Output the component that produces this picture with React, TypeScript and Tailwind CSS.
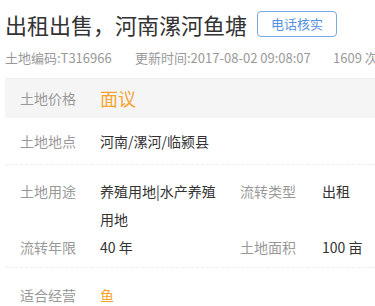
import React from "react";

const font = { fontFamily: '"Noto Sans CJK SC", "Noto Sans", sans-serif' };

export default function App() {
  return (
    <div className="w-[375px] h-[306px] overflow-hidden bg-white pl-[5px]" style={font}>
      <div className="flex items-center h-[47px] pt-[1px]">
        <div className="text-[22px] leading-[30px] text-[#333] whitespace-nowrap">出租出售，河南漯河鱼塘</div>
        <div className="ml-[10px] shrink-0 w-[80px] h-[26px] border border-[#7aa8e6] rounded-[4px] flex items-center justify-center text-[13px] text-[#5592e0]">
          电话核实
        </div>
      </div>
      <div className="flex items-center h-[22px] text-[13px] text-[#999] whitespace-nowrap">
        <div className="w-[130px] shrink-0">土地编码:T316966</div>
        <div className="w-[198px] shrink-0">更新时间:2017-08-02 09:08:07</div>
        <div className="shrink-0">1609 次</div>
      </div>
      <div className="h-[10px] border-b border-[#eeeeee]" />
      <div className="bg-[#f5f5f5] h-[39px] flex items-center pl-[15px]">
        <div className="w-[80px] text-[14px] text-[#999]">土地价格</div>
        <div className="text-[18px] text-[#f5a431]">面议</div>
      </div>
      <div className="h-[47px] flex items-center pl-[15px] border-b border-dashed border-[#eeeeee]">
        <div className="w-[80px] text-[14px] text-[#999]">土地地点</div>
        <div className="text-[14px] text-[#333]">河南/漯河/临颍县</div>
      </div>
      <div className="pt-[12px] pb-[6px] pl-[15px] border-b border-dashed border-[#eeeeee] text-[14px] leading-[28px]">
        <div className="flex">
          <div className="w-[80px] shrink-0 text-[#999]">土地用途</div>
          <div className="w-[140px] shrink-0 text-[#333]">
            <div className="max-w-[122px]">养殖用地|水产养殖用地</div>
          </div>
          <div className="w-[82px] shrink-0 text-[#999]">流转类型</div>
          <div className="text-[#333]">出租</div>
        </div>
        <div className="flex">
          <div className="w-[80px] shrink-0 text-[#999]">流转年限</div>
          <div className="w-[140px] shrink-0 text-[#333]">40 年</div>
          <div className="w-[82px] shrink-0 text-[#999]">土地面积</div>
          <div className="text-[#333]">100 亩</div>
        </div>
      </div>
      <div className="pt-[13px] pl-[15px] flex text-[14px] leading-[28px]">
        <div className="w-[80px] shrink-0 text-[#999]">适合经营</div>
        <div className="text-[#f5a431]">鱼</div>
      </div>
    </div>
  );
}
